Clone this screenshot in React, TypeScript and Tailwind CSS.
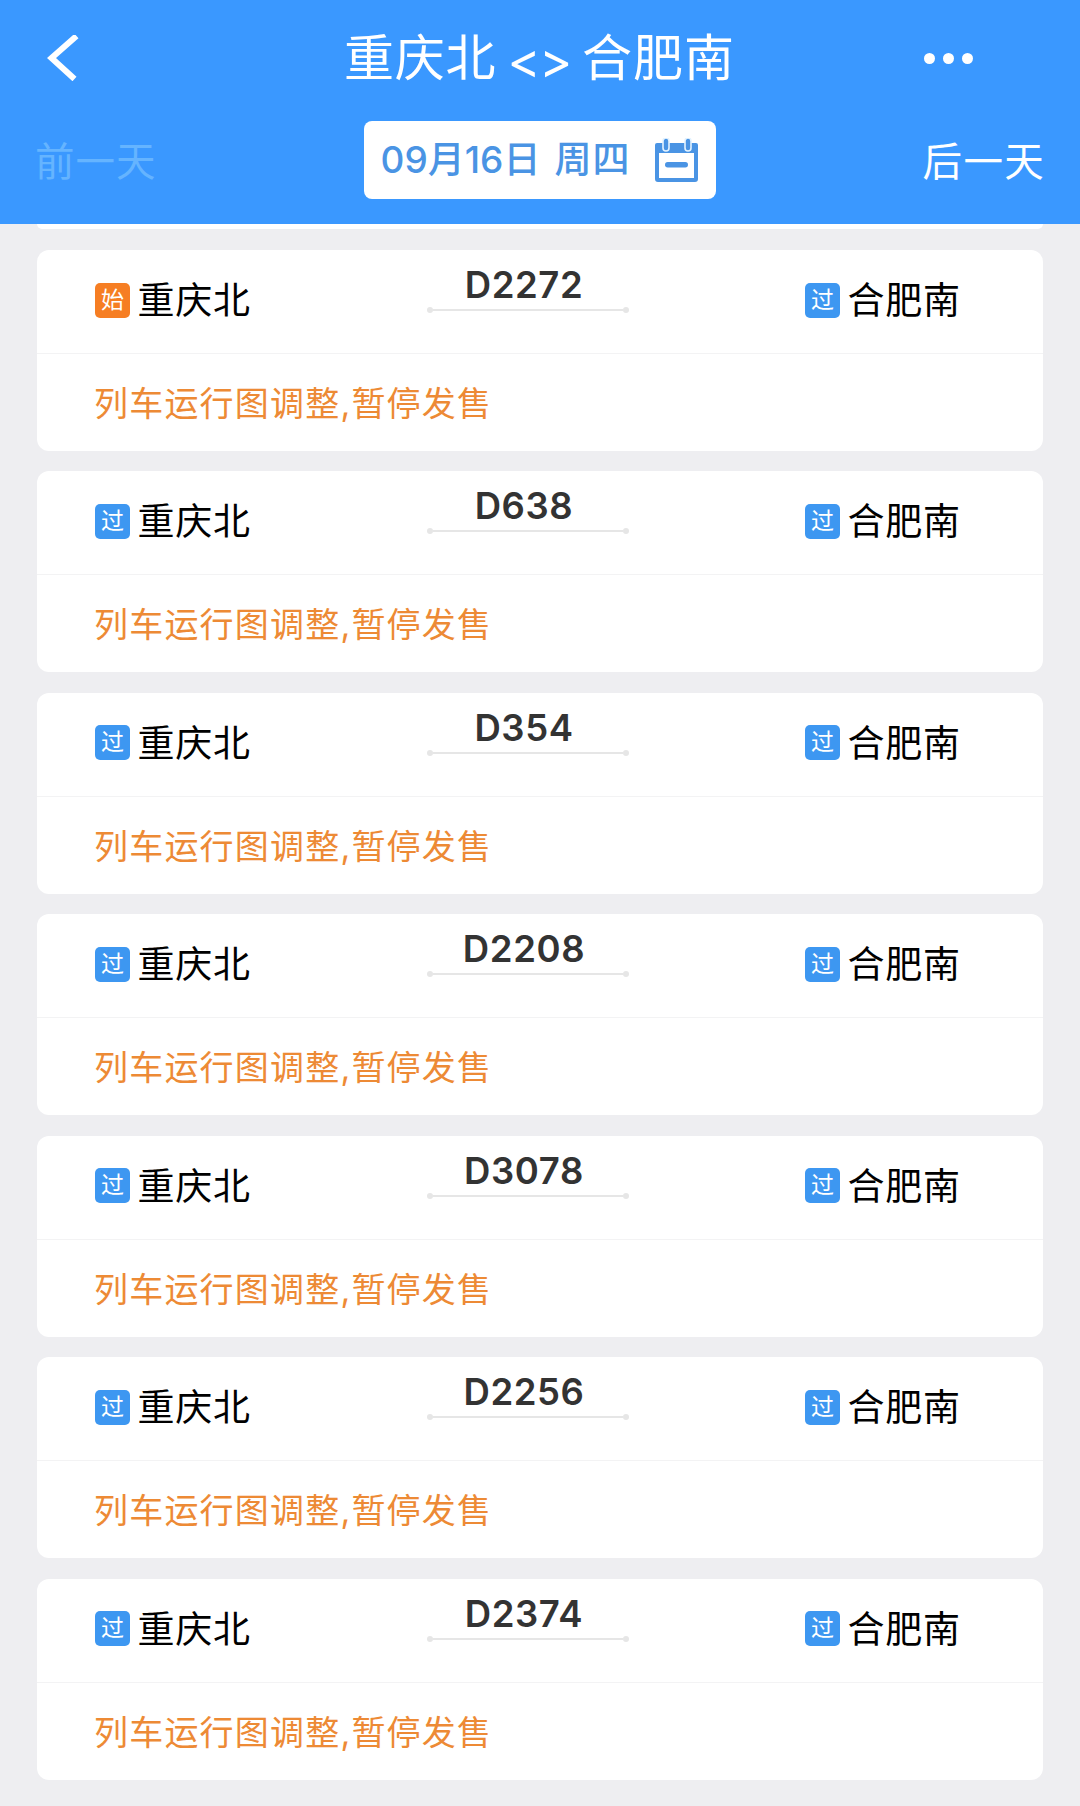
interface Train {
  code: string;
  origin: boolean;
}

const TRAINS: Train[] = [
  { code: 'D2272', origin: true },
  { code: 'D638', origin: false },
  { code: 'D354', origin: false },
  { code: 'D2208', origin: false },
  { code: 'D3078', origin: false },
  { code: 'D2256', origin: false },
  { code: 'D2374', origin: false },
];

function CalendarIcon() {
  return (
    <svg width="45" height="45" viewBox="0 0 45 45" fill="none">
      <path
        fillRule="evenodd"
        d="M3 5H42Q44 5 44 7V41Q44 44 41 44H4Q1 44 1 41V7Q1 5 3 5ZM5 15V40H40V15Z"
        fill="#4a94e4"
      />
      <rect x="9" y="0" width="6" height="13" rx="3" fill="#4a94e4" stroke="#e4f3ff" strokeWidth="1.6" />
      <rect x="31" y="0" width="6" height="13" rx="3" fill="#4a94e4" stroke="#e4f3ff" strokeWidth="1.6" />
      <rect x="11" y="24" width="23" height="5.5" rx="2.7" fill="#4a94e4" />
    </svg>
  );
}

function Header() {
  return (
    <header className="h-[224px] bg-[#3a98ff] text-white">
      <div className="grid h-[116px] grid-cols-[344px_391px_1fr] items-center">
        <svg className="ml-[47px]" width="34" height="46" viewBox="0 0 34 46" fill="none">
          <path d="M29.5 1L4.5 23L27.5 44" stroke="#fff" strokeWidth="6" />
        </svg>
        <h1 className="flex items-center justify-between whitespace-nowrap text-[50px] leading-[60px]">
          <span className="tracking-[0.8px]">重庆北</span>
          <span className="mt-[3px] text-[50px] tracking-[-1.5px]">&lt;&gt;</span>
          <span className="tracking-[1px]">合肥南</span>
        </h1>
        <div className="ml-[189px] flex gap-[8px]">
          <span className="size-[11px] rounded-full bg-white" />
          <span className="size-[11px] rounded-full bg-white" />
          <span className="size-[11px] rounded-full bg-white" />
        </div>
      </div>

      <div className="flex items-start justify-between px-[35px] text-[39.5px] tracking-[1.3px]">
        <button className="mt-[16px] leading-[60px] tracking-[1px] text-[#65b4ff]">前一天</button>
        <button className="mt-[5px] flex h-[78px] w-[352px] items-center justify-between rounded-[8px] bg-white pr-[17px] pl-[17px] text-[37px] tracking-normal text-[#4a94e4]">
          <span className="flex gap-[14px] font-medium">
            <span>
              <span className="font-[450]">09</span>月<span className="font-[450]">16</span>日
            </span>
            <span className="tracking-[1px]">周四</span>
          </span>
          <CalendarIcon />
        </button>
        <button className="mt-[16px] leading-[60px]">后一天</button>
      </div>
    </header>
  );
}

function Station({ name, tag, orange }: { name: string; tag: string; orange?: boolean }) {
  return (
    <div className="flex items-center gap-[7.5px]">
      <span
        className={`flex size-[35px] items-center justify-center rounded-[5px] text-[23px] leading-none text-white ${
          orange ? 'bg-[#f67e23]' : 'bg-[#3d97f1]'
        }`}
      >
        {tag}
      </span>
      <span className="mt-[2px] text-[37px] leading-[50px] tracking-[0.8px] text-black">{name}</span>
    </div>
  );
}

function TrainCard({ train }: { train: Train }) {
  return (
    <article className="h-[201px] rounded-[12px] bg-white">
      <div className="grid h-[104px] grid-cols-[390px_202px_1fr] border-b border-[#f3f3f4]">
        <div className="mt-[24px] ml-[58px]">
          <Station name="重庆北" tag={train.origin ? '始' : '过'} orange={train.origin} />
        </div>
        <div>
          <div className="mt-[13px] h-[44px] pr-[8px] text-center text-[36.5px] leading-[44px] font-semibold tracking-[0.6px] text-[#333]">
            {train.code}
          </div>
          <div className="flex h-[6px] items-center">
            <span className="size-[6px] rounded-full bg-[#e6e6e6]" />
            <span className="h-[2px] flex-1 bg-[#e6e6e6]" />
            <span className="size-[6px] rounded-full bg-[#e6e6e6]" />
          </div>
        </div>
        <div className="mt-[24px] ml-[176px]">
          <Station name="合肥南" tag="过" />
        </div>
      </div>
      <p className="pt-[25px] pl-[57px] text-[34px] leading-[50px] tracking-[1.2px] text-[#ed8a35]">
        列车运行图调整,暂停发售
      </p>
    </article>
  );
}

export default function App() {
  return (
    <div className="h-[1806px] w-[1080px] overflow-hidden bg-[#eeeef1] font-['Inter','Noto_Sans_CJK_SC',sans-serif]">
      <Header />
      {/* tail of the card scrolled under the header */}
      <div className="mx-[37px] h-[5px] rounded-b-[5px] bg-white" />
      <main className="mx-[37px] mt-[21px] flex flex-col gap-[20.45px]">
        {TRAINS.map(train => (
          <TrainCard key={train.code} train={train} />
        ))}
      </main>
    </div>
  );
}
